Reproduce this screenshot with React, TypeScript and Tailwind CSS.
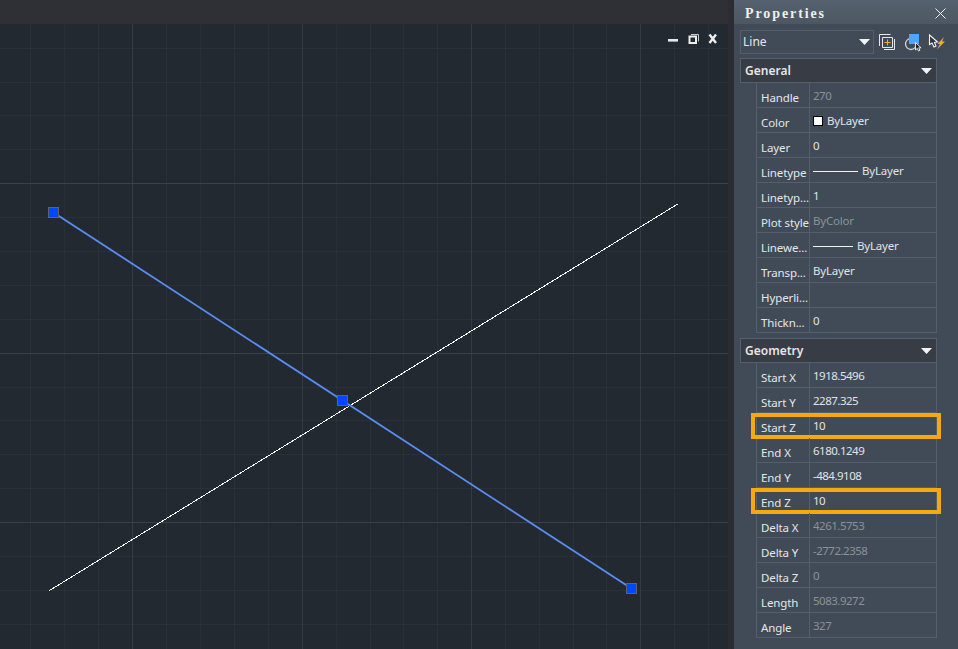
interface Row {
  label: string
  value: string
  dim?: boolean
  swatch?: boolean
  sample?: string
  mark?: boolean
  num?: boolean
}

const general: Row[] = [
  { label: 'Handle', value: '270', dim: true, num: true },
  { label: 'Color', value: 'ByLayer', swatch: true },
  { label: 'Layer', value: '0', num: true },
  { label: 'Linetype', value: 'ByLayer', sample: 'w-[45px]' },
  { label: 'Linetyp...', value: '1', num: true },
  { label: 'Plot style', value: 'ByColor', dim: true },
  { label: 'Linewe...', value: 'ByLayer', sample: 'w-[40px]' },
  { label: 'Transp...', value: 'ByLayer' },
  { label: 'Hyperli...', value: '' },
  { label: 'Thickn...', value: '0', num: true },
]

const geometry: Row[] = [
  { label: 'Start X', value: '1918.5496', num: true },
  { label: 'Start Y', value: '2287.325', num: true },
  { label: 'Start Z', value: '10', mark: true, num: true },
  { label: 'End X', value: '6180.1249', num: true },
  { label: 'End Y', value: '-484.9108', num: true },
  { label: 'End Z', value: '10', mark: true, num: true },
  { label: 'Delta X', value: '4261.5753', dim: true, num: true },
  { label: 'Delta Y', value: '-2772.2358', dim: true, num: true },
  { label: 'Delta Z', value: '0', dim: true, num: true },
  { label: 'Length', value: '5083.9272', dim: true, num: true },
  { label: 'Angle', value: '327', dim: true, num: true },
]

const minorX = [30.5, 64.5, 98.5, 166.5, 200.5, 234.5, 268.5, 336.5, 370.5, 403.5, 437.5, 505.5, 539.5, 573.5, 606.5, 674.5, 708.5]
const majorX = [132.5, 302.5, 471.5, 640.5]
const minorY = [48.5, 82.5, 115.5, 149.5, 217.5, 251.5, 285.5, 319.5, 387.5, 420.5, 454.5, 488.5, 556.5, 590.5, 624.5]
const majorY = [183.5, 353.5, 522.5]

function Handle({ x, y }: { x: number; y: number }) {
  return <rect x={x} y={y} width="10" height="10" fill="#0048ff" stroke="#5f6368" strokeWidth="1" />
}

function Drawing() {
  return (
    <svg className="block h-full w-full" viewBox="0 24 728 625">
      {minorX.map((x) => (
        <line key={x} x1={x} x2={x} y1="24" y2="649" stroke="#28303a" />
      ))}
      {minorY.map((y) => (
        <line key={y} x1="0" x2="728" y1={y} y2={y} stroke="#28303a" />
      ))}
      {majorX.map((x) => (
        <line key={x} x1={x} x2={x} y1="24" y2="649" stroke="#343b45" />
      ))}
      {majorY.map((y) => (
        <line key={y} x1="0" x2="728" y1={y} y2={y} stroke="#3a414a" />
      ))}
      <line x1="49.5" y1="590.5" x2="678.5" y2="203.5" stroke="#ffffff" strokeWidth="1" shapeRendering="crispEdges" />
      <line x1="53.5" y1="212.5" x2="631.5" y2="588.5" stroke="#5a8df2" strokeWidth="1.8" />
      <Handle x={48.5} y={207.5} />
      <Handle x={337.5} y={395.5} />
      <Handle x={626.5} y={583.5} />
    </svg>
  )
}

function WindowButtons() {
  return (
    <svg className="absolute left-[664px] top-[7px]" width="56" height="16" viewBox="0 0 56 16">
      <rect x="4" y="8" width="10" height="2.6" fill="#e8e8e8" />
      <path d="M27 3.500h7.500v7" fill="none" stroke="#c8c8c8" strokeWidth="1" />
      <rect x="25.500" y="5.500" width="6.500" height="6.500" fill="none" stroke="#ededed" strokeWidth="2" />
      <path d="M45.500 3.500 52 12M52 3.500 45.500 12" stroke="#ededed" strokeWidth="2.4" fill="none" />
    </svg>
  )
}

function Caret() {
  return (
    <svg width="11" height="6" viewBox="0 0 11 6" className="shrink-0">
      <path d="M0 0h11L5.500 6z" fill="#f2f3f4" />
    </svg>
  )
}

function ToolIcons() {
  return (
    <div className="ml-[5px] flex items-center">
      <svg width="18" height="18" viewBox="0 0 18 18">
        <path d="M.5 13V1.500h11" fill="none" stroke="#e6e8ea" />
        <path d="M3.500 4.500h10v10h-10z" fill="none" stroke="#e6e8ea" />
        <path d="M5 16.500h10.500V6" fill="none" stroke="#e6e8ea" />
        <path d="M8.500 6.500v6M5.500 9.500h6" stroke="#f0b429" strokeWidth="1" />
      </svg>
      <svg className="ml-[7px]" width="20" height="20" viewBox="0 0 20 20">
        <circle cx="7" cy="12" r="5.500" fill="none" stroke="#cfd3d6" strokeWidth="1.300" />
        <rect x="5" y="2" width="10" height="10" fill="#4da6ff" />
        <path d="M11.500 10.500v7.500l1.800-1.600 1.200 2.600 1.400-.7-1.200-2.500h2.400z" fill="#1f2429" stroke="#f4f4f4" strokeWidth="0.900" />
      </svg>
      <svg className="ml-[4px]" width="18" height="18" viewBox="0 0 18 18">
        <path d="M1.500 2V11.500l2.500-1.500 2 4 2-1-1.500-3.500 3-.5z" fill="#2f353c" stroke="#f2f2f2" strokeWidth="1.100" />
        <path d="M16 4 9.500 11H12l-3 5.500 8-8h-3z" fill="#f2b01e" />
      </svg>
    </div>
  )
}

function Section({ title, rows }: { title: string; rows: Row[] }) {
  return (
    <div>
      <div className="flex h-[25px] w-[197px] items-center justify-between border border-[#545f6b] bg-[#383c44] pl-[4px] pr-[4px] text-[12px] font-semibold text-[#e4e6e8]">
        <span>{title}</span>
        <Caret />
      </div>
      <div className="ml-[16px] w-[181px] border-l border-r border-[#545f6b]">
        {rows.map((r) => (
          <RowView key={r.label} row={r} />
        ))}
      </div>
    </div>
  )
}

function RowView({ row }: { row: Row }) {
  return (
    <div className="relative grid h-[25px] grid-cols-[53px_1fr] border-b border-[#545f6b] text-[11.5px] leading-none">
      <div className="flex items-center whitespace-nowrap border-r border-[#545f6b] pl-[4px] pt-[5px] tracking-[-0.1px] text-[#e4e7ea]">
        {row.label}
      </div>
      <div
        className={`flex items-center whitespace-nowrap pl-[3px] pt-[2px] ${row.num ? 'tracking-[-0.5px]' : 'tracking-[-0.2px]'} ${row.dim ? 'text-[#8b9197]' : 'text-[#e0e3e6]'}`}
      >
        {row.swatch && <span className="mr-[4px] h-[10px] w-[10px] border border-black bg-white" />}
        {row.sample && <span className={`mr-[4px] h-px bg-[#f0f0f0] ${row.sample}`} />}
        {row.value}
      </div>
      {row.mark && <div className="absolute -left-[6px] top-0 h-[26px] w-[190px] border-4 border-[#f5a90f]" />}
    </div>
  )
}

export default function App() {
  return (
    <div className="flex h-[649px] w-[958px] overflow-hidden bg-[#2a2e34] font-['Noto_Sans',sans-serif]">
      <div className="flex w-[728px] flex-col">
        <div className="h-[24px] bg-[#2e3035]" />
        <div className="relative flex-1 bg-[#222931]">
          <Drawing />
          <WindowButtons />
        </div>
      </div>
      <div className="w-[6px] bg-[#2a2e34]" />
      <div className="flex w-[224px] flex-col bg-[#414b57]">
        <div className="flex h-[24px] items-center justify-between bg-gradient-to-b from-[#566170] to-[#4c5762] pl-[11px] pr-[12px] pt-[2px]">
          <span className="font-['Liberation_Serif',serif] text-[14px] font-bold tracking-[1.9px] text-[#eef0f1]">
            Properties
          </span>
          <svg width="11" height="11" viewBox="0 0 11 11">
            <path d="M.5.500l10 10M10.500.500l-10 10" stroke="#eceef0" strokeWidth="1" />
          </svg>
        </div>
        <div className="flex h-[34px] items-center pl-[6px] pt-[2px]">
          <div className="flex h-[24px] w-[134px] items-center justify-between border border-[#545f6b] pl-[2px] pr-[3px] text-[12px] text-[#e4e7ea]">
            <span>Line</span>
            <Caret />
          </div>
          <ToolIcons />
        </div>
        <div className="flex flex-col gap-[5px] pl-[6px]">
          <Section title="General" rows={general} />
          <Section title="Geometry" rows={geometry} />
        </div>
      </div>
    </div>
  )
}
